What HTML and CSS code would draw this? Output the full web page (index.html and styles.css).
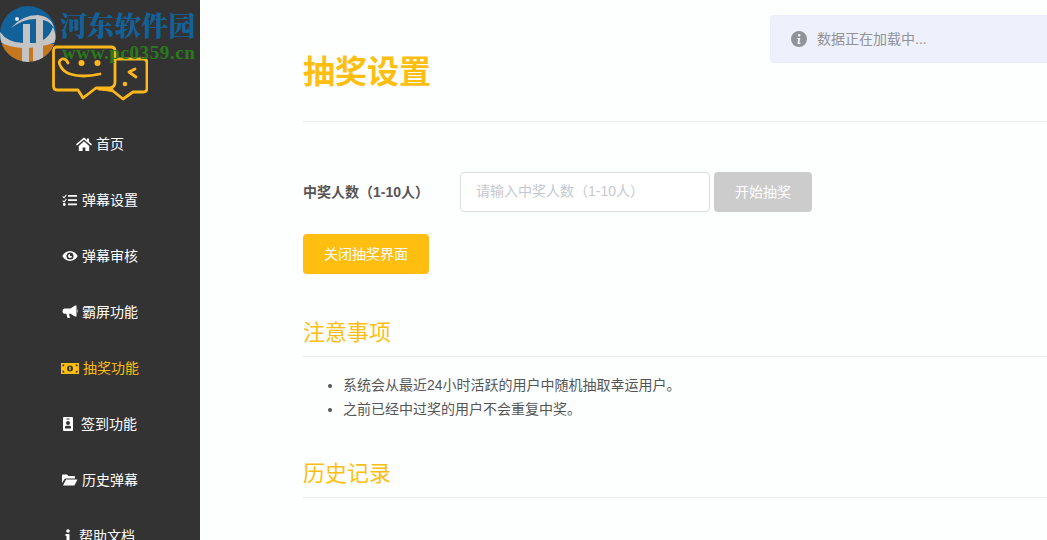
FILE: index.html
```html
<!DOCTYPE html>
<html lang="zh-CN">
<head>
<meta charset="utf-8">
<title>抽奖设置</title>
<link rel="stylesheet" href="styles.css">
</head>
<body>
<div class="app">
  <aside class="sidebar">
    <div class="logo">
      <svg width="96" height="56" viewBox="0 0 96 56" fill="none" stroke="#fdb71c" stroke-width="2.800" stroke-linecap="round" stroke-linejoin="round">
        <path d="M5 2H59Q63 2 63 6V37Q63 42 58 43H44L31 53L26 45H5Q1.500 45 1.500 41V6Q1.500 2 5 2Z"/>
        <path d="M63 14H91Q95 14 95 18V43Q95 47 91 47H81L71 54L61 46Q54 44 47 44"/>
        <path d="M16 18Q14 13 10 14Q5 16 9 22Q12 27 18 29Q30 33 48 29"/>
        <circle cx="29.500" cy="18" r="3" fill="#fdb71c" stroke="none"/>
        <circle cx="45.500" cy="18" r="3" fill="#fdb71c" stroke="none"/>
        <path d="M83 24L77 27L84 32"/>
        <circle cx="73" cy="39" r="2.300" fill="#fdb71c" stroke="none"/>
        <path d="M52 44.500H60"/>
      </svg>
    </div>
    <nav class="nav">
      <a class="nav-item"><svg class="icon" viewBox="0 0 16 14"><path d="M8 .5 0 7.300l1 1.200 7-6 7 6 1-1.200-3-2.600V1.500h-2v1.500zM2.800 9v5h3.800v-3.500h2.800V14h3.800V9L8 4.300z"/></svg>首页</a>
      <a class="nav-item"><svg class="icon" viewBox="0 0 16 14"><path d="M6 2h9v1.800H6zM6 6.200h9V8H6zM6 10.500h9v1.800H6zM1 3l1 1 2-2.500.8.600L2.200 5.500.3 3.700zM1 7.200l1 1 2-2.500.8.600-2.600 3.400L.3 7.900z"/><circle cx="2.300" cy="11.500" r="1.400"/></svg>弹幕设置</a>
      <a class="nav-item"><svg class="icon icon-wide" viewBox="0 0 16 12"><path fill-rule="evenodd" d="M8 1C4.500 1 1.800 3.400.3 6 1.800 8.600 4.500 11 8 11s6.200-2.400 7.700-5C14.200 3.400 11.500 1 8 1zm0 1.500a3.500 3.500 0 1 1 0 7 3.500 3.500 0 0 1 0-7zM8 4a2 2 0 1 0 2 2H8z"/></svg>弹幕审核</a>
      <a class="nav-item"><svg class="icon icon-wide" viewBox="0 0 16 14"><path d="M13 .5h1.500v11H13L8.500 8.800H7L8 13H5.500L4.300 8.800H2.500Q.5 8.800.5 6.300T2.500 3.500H8.500zM15 4.500h.5v3H15z"/></svg>霸屏功能</a>
      <a class="nav-item active"><svg class="icon icon-money" viewBox="0 0 18 11"><path fill-rule="evenodd" d="M0 0h18v11H0zM9 2.500a3 3 0 1 0 0 6 3 3 0 0 0 0-6zM1.500 1.500v2a2 2 0 0 0 2-2zM14.500 1.500a2 2 0 0 0 2 2v-2zM1.500 7.500v2h2a2 2 0 0 0-2-2zM16.500 7.500a2 2 0 0 0-2 2h2z"/><path d="M8.200 3.800h1.400v3.400H8.200z"/></svg>抽奖功能</a>
      <a class="nav-item"><svg class="icon icon-badge" viewBox="0 0 10 14"><path fill-rule="evenodd" d="M1 0h8a1 1 0 0 1 1 1v12a1 1 0 0 1-1 1H1a1 1 0 0 1-1-1V1a1 1 0 0 1 1-1zM5 4a2 2 0 1 0 0 4 2 2 0 0 0 0-4zM2 11.500h6V10Q8 8.800 6.500 8.800h-3Q2 8.800 2 10zM3.500 1.500v1h3v-1z"/></svg>签到功能</a>
      <a class="nav-item"><svg class="icon icon-wide" viewBox="0 0 16 13"><path d="M0 2a1 1 0 0 1 1-1h4l1.500 1.500H12a1 1 0 0 1 1 1V5H4Q2.800 5 2.200 6L0 9.500zM4 6h11.500l-2.800 5.500Q12.400 12 11.500 12H1z"/></svg>历史弹幕</a>
      <a class="nav-item"><svg class="icon icon-info" viewBox="0 0 6 14"><circle cx="3" cy="2" r="1.800"/><path d="M.5 5h4v7h1.300v2H.2v-2h1.300V7H.5z"/></svg>帮助文档</a>
    </nav>
  </aside>
  <main class="main">
    <h1 class="title">抽奖设置</h1>
    <form class="form-row">
      <label class="label">中奖人数（1-10人）</label>
      <input class="input" placeholder="请输入中奖人数（1-10人）">
      <button class="btn btn-disabled" type="button">开始抽奖</button>
    </form>
    <button class="btn btn-close" type="button">关闭抽奖界面</button>
    <h2 class="section-title">注意事项</h2>
    <ul class="notes">
      <li>系统会从最近24小时活跃的用户中随机抽取幸运用户。</li>
      <li>之前已经中过奖的用户不会重复中奖。</li>
    </ul>
    <h2 class="section-title section-history">历史记录</h2>
  </main>
</div>
<div class="toast">
  <svg class="toast-icon" viewBox="0 0 16 16"><path fill-rule="evenodd" d="M8 0a8 8 0 1 1 0 16A8 8 0 0 1 8 0zM8.200 3a1.300 1.300 0 1 0 0 2.600 1.300 1.300 0 0 0 0-2.600zM6.300 7v1h.9l-.8 4.200q0 1 1.200 1 1.300 0 2.200-1l-.3-.6-1 .4L9.300 7z"/></svg>
  <span>数据正在加载中...</span>
</div>
<div class="watermark">
  <svg class="wm-logo" viewBox="0 0 56 62">
    <defs><clipPath id="wm-disc"><circle cx="28" cy="34" r="28"/></clipPath></defs>
    <g clip-path="url(#wm-disc)">
      <rect width="56" height="62" fill="#136199"/>
      <rect y="44" width="56" height="18" fill="#c6761c"/>
      <path d="M0 32Q8 43 23 43V24H30V43H36V18H43V40Q50 36 53 27Q56 33 56 42Q40 48 22 48Q8 47 0 42z" fill="#c4c4c4"/>
      <path d="M11 28Q22 15 38 15Q52 17 54 28Q50 20 38 19Q24 18 11 28z" fill="#c4c4c4"/>
      <path d="M22 46h7v16h-7zM33 46h10v16H33z" fill="#c4c4c4"/>
      <path d="M11 34L18 27H22V42H17V33z" fill="#136199"/>
    </g>
    <circle cx="17" cy="19" r="2" fill="#dfe6ee"/>
  </svg>
  <div class="wm-text">
    <div class="wm-name">河东软件园</div>
    <div class="wm-url">www.pc0359.cn</div>
  </div>
</div>
</body>
</html>
```
FILE: styles.css
```css
* { box-sizing: border-box; }
html, body {
  margin: 0;
  height: 100%;
  overflow: hidden;
  background: #fdfefe;
  font-family: "Liberation Sans", "Noto Sans CJK SC", sans-serif;
  font-size: 14px;
  color: #515a6e;
}
.app { display: flex; height: 540px; overflow: hidden; }
.sidebar {
  width: 200px;
  flex: none;
  background: #333;
  color: #fff;
}
.logo {
  height: 116px;
  padding: 45px 0 0 52px;
}
.logo svg { display: block; }
.nav { display: flex; flex-direction: column; }
.nav-item {
  height: 56px;
  flex: none;
  display: flex;
  align-items: center;
  justify-content: center;
  padding-bottom: 2px;
  color: #fff;
  font-size: 14px;
}
.nav-item.active { color: #ffbe10; }
.icon { width: 16px; height: 14px; margin-top: 2px; margin-right: 4px; fill: currentColor; flex: none; }
.icon-wide { margin-right: 4px; }
.icon-money { width: 18px; height: 11px; }
.icon-badge { width: 10px; height: 14px; margin-right: 8px; }
.icon-info { width: 6px; height: 14px; margin-right: 8px; }
.main {
  flex: 1;
  min-width: 0;
  padding-left: 103px;
}
.title {
  margin: 0;
  height: 122px;
  padding-top: 48px;
  font-size: 32px;
  line-height: 48px;
  font-weight: 700;
  color: #ffbe10;
  border-bottom: 1px solid #e8eaec;
}
.form-row {
  display: flex;
  align-items: center;
  margin-top: 50px;
  height: 40px;
}
.label {
  width: 157px;
  flex: none;
  padding-bottom: 2px;
  font-size: 14px;
  font-weight: 700;
  color: #555;
  white-space: nowrap;
}
.input {
  width: 250px;
  height: 40px;
  padding: 0 15px 2px;
  border: 1px solid #dcdee2;
  border-radius: 4px;
  background: #fff;
  font: inherit;
  outline: none;
}
.input::placeholder { color: #c5c8ce; opacity: 1; }
.btn {
  display: block;
  height: 40px;
  border: 0;
  border-radius: 4px;
  color: #fff;
  font: inherit;
  padding: 0 0 2px;
}
.btn-disabled { width: 98px; margin-left: 4px; background: #ccc; }
.btn-close { width: 126px; margin-top: 22px; background: #ffbe10; }
.section-title {
  margin: 40px 0 0;
  height: 43px;
  font-size: 22px;
  line-height: 38px;
  font-weight: 400;
  color: #ffbe10;
  border-bottom: 1px solid #e8eaec;
}
.notes {
  margin: 16px 0 0;
  padding: 0 0 0 40px;
  color: #555;
  line-height: 24px;
  font-size: 14px;
}
.section-history { margin-top: 34px; }
.toast {
  position: absolute;
  top: 15px;
  left: 770px;
  width: 300px;
  height: 48px;
  display: flex;
  align-items: center;
  padding: 0 0 2px 20px;
  gap: 10px;
  background: #eef0fb;
  border: 1px solid #ebeefa;
  border-radius: 4px;
  color: #909399;
  font-size: 14px;
}
.toast-icon { width: 16px; height: 16px; margin-top: 2px; fill: #909399; flex: none; }
.watermark {
  position: absolute;
  top: 0;
  left: 0;
  display: flex;
  pointer-events: none;
}
.wm-logo { width: 56px; height: 62px; flex: none; }
.wm-text { margin-left: 4px; }
.wm-name {
  margin-top: 8px;
  font-family: "Noto Serif CJK SC", "Noto Sans CJK SC", sans-serif;
  font-weight: 900;
  font-size: 27px;
  line-height: 34px;
  letter-spacing: .1px;
  color: #136199;
}
.wm-url {
  margin: 2px 0 0 2px;
  font-family: "Liberation Serif", serif;
  font-weight: 700;
  font-size: 19px;
  line-height: 18px;
  letter-spacing: .6px;
  color: #2a7a1c;
  white-space: nowrap;
}
```
